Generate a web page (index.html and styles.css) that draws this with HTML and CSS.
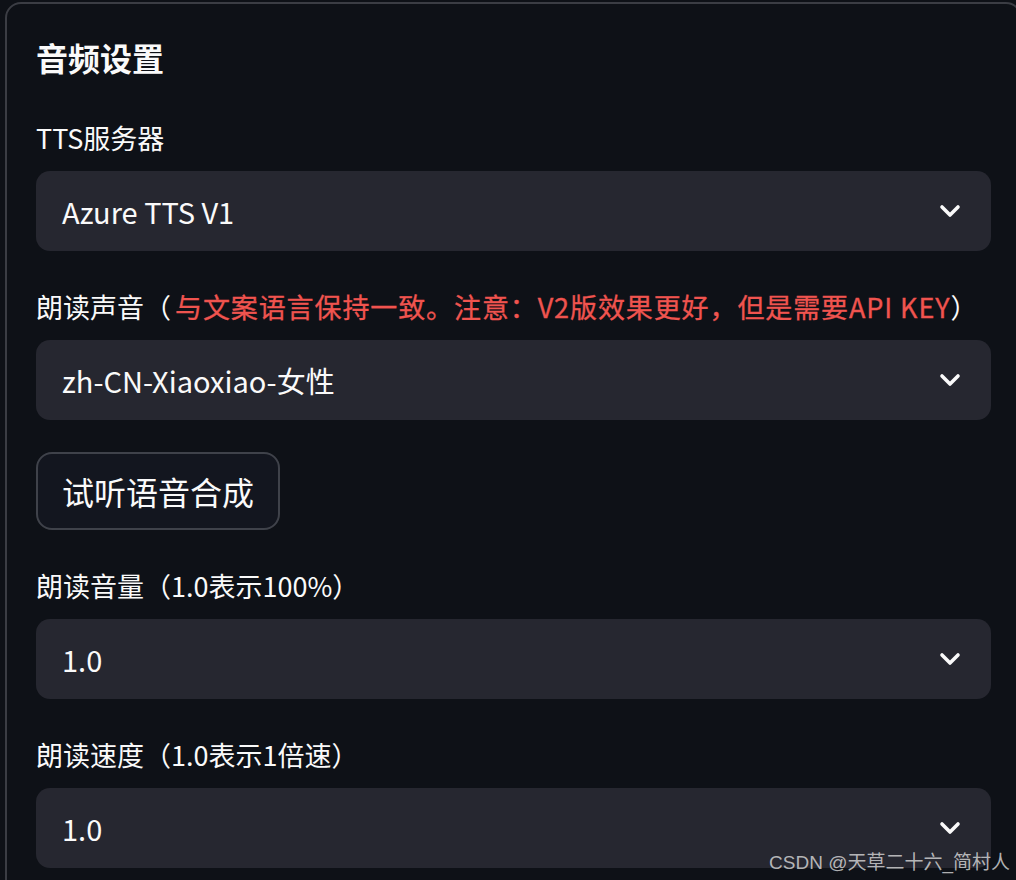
FILE: index.html
```html
<!DOCTYPE html>
<html lang="zh-CN">
<head>
<meta charset="utf-8">
<title>音频设置</title>
<link rel="stylesheet" href="styles.css">
</head>
<body>
<div class="panel">
  <h2 class="title">音频设置</h2>

  <div class="field">
    <label class="label">TTS服务器</label>
    <div class="select">
      <span class="value">Azure TTS V1</span>
      <svg class="chevron" viewBox="0 0 22 14" width="22" height="14"><path d="M3 3 L11 11 L19 3" fill="none" stroke="#fafafa" stroke-width="3.6" stroke-linecap="round" stroke-linejoin="round"/></svg>
    </div>
  </div>

  <div class="field">
    <label class="label">朗读声音（<span class="red">与文案语言保持一致。注意：V2版效果更好，但是需要API KEY</span>）</label>
    <div class="select">
      <span class="value">zh-CN-Xiaoxiao-女性</span>
      <svg class="chevron" viewBox="0 0 22 14" width="22" height="14"><path d="M3 3 L11 11 L19 3" fill="none" stroke="#fafafa" stroke-width="3.6" stroke-linecap="round" stroke-linejoin="round"/></svg>
    </div>
  </div>

  <div class="btn-row">
    <button class="btn">试听语音合成</button>
  </div>

  <div class="field">
    <label class="label">朗读音量（1.0表示100%）</label>
    <div class="select">
      <span class="value">1.0</span>
      <svg class="chevron" viewBox="0 0 22 14" width="22" height="14"><path d="M3 3 L11 11 L19 3" fill="none" stroke="#fafafa" stroke-width="3.6" stroke-linecap="round" stroke-linejoin="round"/></svg>
    </div>
  </div>

  <div class="field">
    <label class="label">朗读速度（1.0表示1倍速）</label>
    <div class="select">
      <span class="value">1.0</span>
      <svg class="chevron" viewBox="0 0 22 14" width="22" height="14"><path d="M3 3 L11 11 L19 3" fill="none" stroke="#fafafa" stroke-width="3.6" stroke-linecap="round" stroke-linejoin="round"/></svg>
    </div>
  </div>
</div>
<div class="watermark">CSDN @天草二十六_简村人</div>
</body>
</html>
```

FILE: styles.css
```css
html, body {
  margin: 0;
  padding: 0;
  height: 100%;
  overflow: hidden;
  background: #0e1117;
}

body {
  font-family: "Noto Sans CJK SC", "Noto Sans", sans-serif;
  color: #fafafa;
  position: relative;
}

.panel {
  margin: 2px 0 0 5px;
  width: 955px;
  min-height: 900px;
  border: 2px solid #3b3d44;
  border-radius: 16px;
  padding: 33px 29px 0 29px;
  display: flex;
  flex-direction: column;
  gap: 38px;
}

.title {
  margin: 0 0 5px 0;
  font-size: 32px;
  line-height: 40px;
  font-weight: 700;
}

.field {
  display: flex;
  flex-direction: column;
  gap: 15px;
}

.label {
  font-size: 27px;
  line-height: 36px;
  display: block;
}

.red {
  color: #f0544f;
  font-weight: 400;
  letter-spacing: 0.9px;
  margin-left: 4px;
  -webkit-text-stroke: 0.3px #f0544f;
}

.select {
  height: 80px;
  background: #262730;
  border-radius: 14px;
  display: flex;
  align-items: center;
  justify-content: space-between;
  padding: 0 30px 0 26px;
}

.value {
  font-size: 29px;
  line-height: 40px;
}

.chevron {
  display: block;
}

.btn-row {
  margin-top: -6px;
  display: flex;
}

.btn {
  height: 78px;
  padding: 0 24px;
  background: #13161f;
  border: 2px solid #3f424a;
  border-radius: 16px;
  color: #fafafa;
  font-family: "Noto Sans CJK SC", "Noto Sans", sans-serif;
  font-size: 32px;
  line-height: 40px;
}

.watermark {
  position: absolute;
  right: 6px;
  bottom: 6px;
  font-family: "Liberation Sans", "Noto Sans CJK SC", sans-serif;
  font-size: 19px;
  color: rgba(220, 220, 220, 0.8);
}
```
